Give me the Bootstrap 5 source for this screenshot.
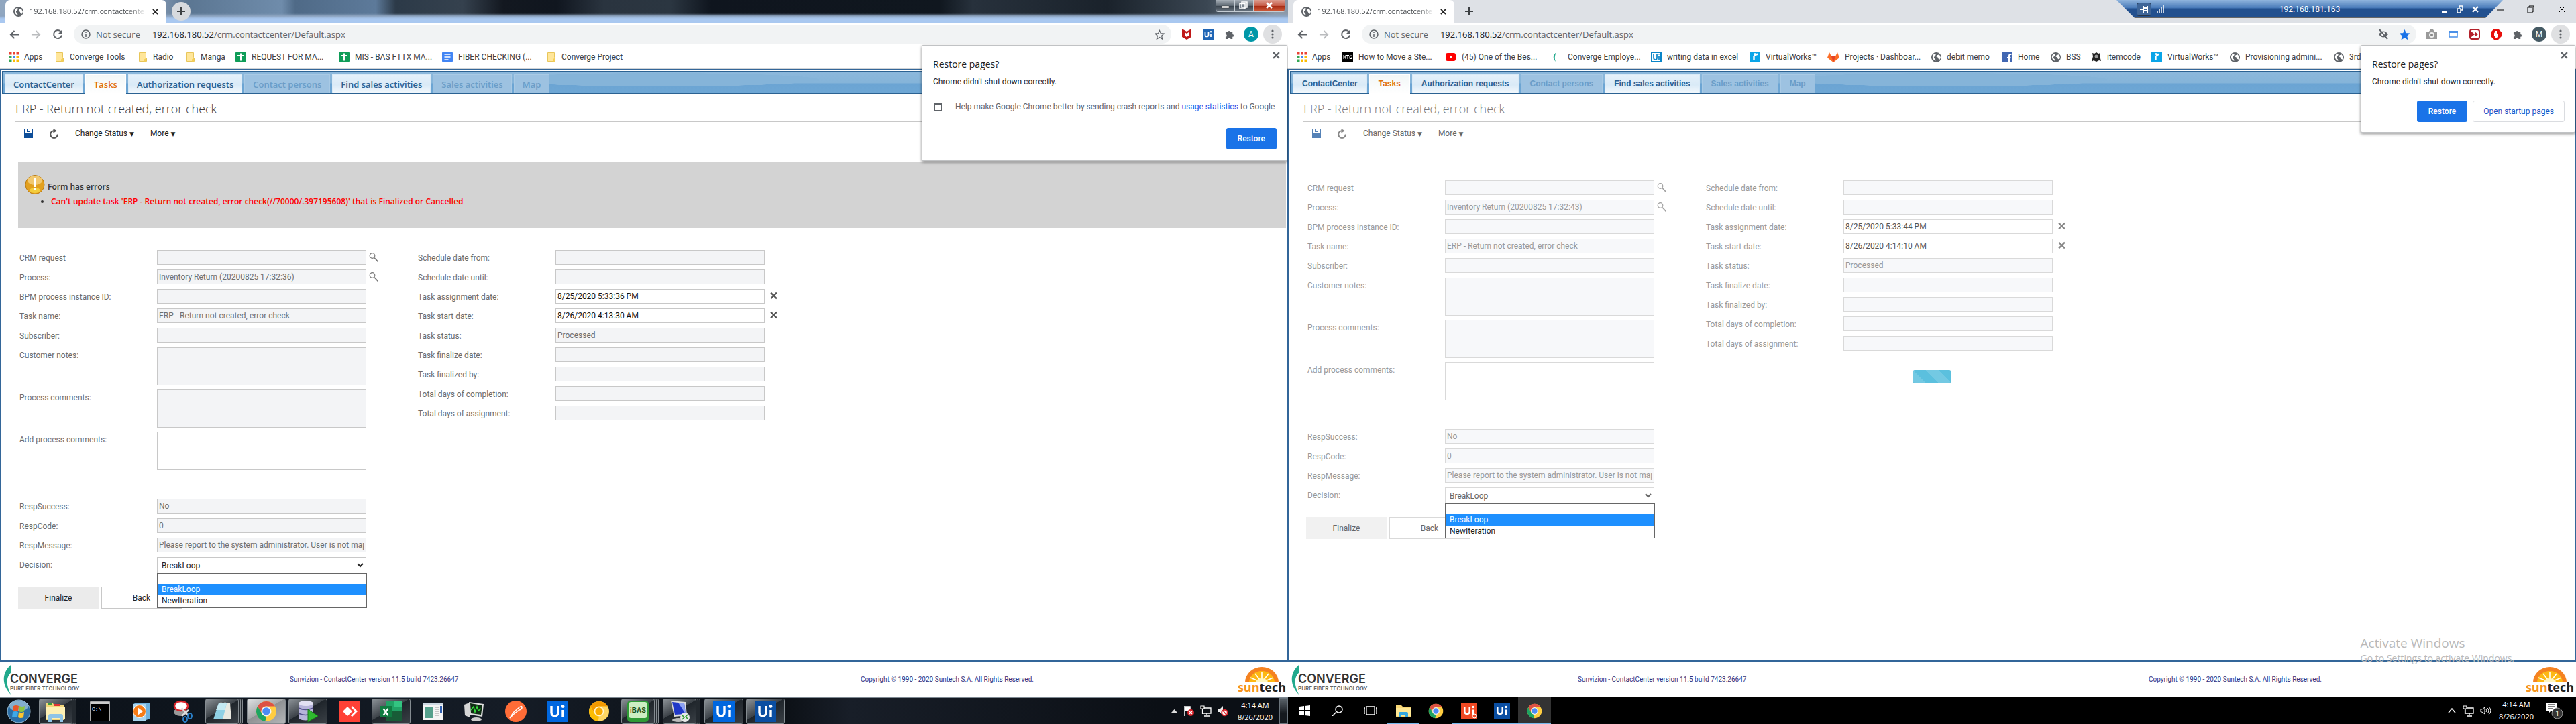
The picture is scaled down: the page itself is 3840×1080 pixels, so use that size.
<!DOCTYPE html>
<html lang="en">
<head>
<meta charset="utf-8">
<meta name="viewport" content="width=device-width, initial-scale=1">
<title>ContactCenter - dual desktop</title>
<link href="https://cdn.jsdelivr.net/npm/bootstrap@5.3.0/dist/css/bootstrap.min.css" rel="stylesheet">
<style>
body{font:12px/16px Roboto,"Open Sans",sans-serif;color:#222;background:#fff;overflow:hidden}
svg{display:block;flex:none}
button{font:inherit;color:inherit;background:none;border:0;padding:0;flex:none}
a{color:inherit;text-decoration:none}
.desk{min-height:100vh;flex:1 1 0;min-width:0;overflow:hidden;--ink:#222;--ttl:#3c3c3c;--lbl:#6c6c6c;--val:#6f6f6f;--date:#111;--bd:#c8c8c8;--fill:#f3f4f6;--ic:1}
.desk.dim{--ink:#666;--ttl:#7c7c7c;--lbl:#999;--val:#999;--date:#555;--bd:#d9d9d9;--fill:#f7f8fa;--ic:.7}
/* window title bars */
.titlebar{height:34px;padding-left:8px;background:#dee1e6}
.aero .titlebar{background:linear-gradient(180deg,transparent 20px,#8da4c0 24px,#a9c8f0 28px,#a9c8f0),linear-gradient(90deg,#91a7c0 0,#7d93ad 240px,#5b7692 280px,#6f8cab 420px,#4f6a87 440px,#5d7a9a 560px,#2c3a48 590px,#35414e 690px,#131820 750px,#10161f 830px,#2a343f 900px,#2b3641 1000px,#0f151e 1060px,#10171f 1400px,#27313c 1450px,#1a222b 1650px,#3b4753 1800px,#8c99a8 1900px)}
.browser-tab{width:240px;height:34px;background:#fff;border-radius:7px 7px 0 0;padding:0 12px;gap:9px}
.tab-text{font:11px/16px "Open Sans",sans-serif;flex:1 1 0;white-space:nowrap;color:#45494d;-webkit-mask-image:linear-gradient(90deg,#000 85%,transparent)}
.newtab{width:28px;height:28px;margin-left:8px;border-radius:50%}
.aero .newtab{background:#d7dade}
.aero-ctl{position:absolute;top:0;right:4px;height:18px;border:1px solid #c4ccd3;border-top:0;border-radius:0 0 4px 4px;background:linear-gradient(#a7afb7,#5e6973 50%,#39434d 52%,#6a7580)}
.aero-ctl button{height:17px;width:28px;border-right:1px solid #c4ccd3}
.aero-ctl .shut{width:46px;border:0;background:linear-gradient(#dc9c8e,#c55a45 50%,#a62a12 52%,#cf5d3c);border-radius:0 0 4px 0}
.ctl10{position:absolute;top:5px;right:15px;gap:33px}
.rdp{position:absolute;top:0;right:109px;width:576px;height:27px;clip-path:polygon(0 0,100% 0,95.5% 100%,4.7% 100%);background:linear-gradient(#8fb4dd,#4779b8 12px,#22508f 13px,#22508f 25px,#666 26px);color:#fff}
.rdp .pin{width:22px;height:20px;border:1px solid #26364a;border-radius:3px;background:#3e6598}
.rl,.rc{width:132px}
.rl{padding-left:30px}
.rc{gap:13px;padding-right:36px}
/* toolbar */
.toolbar{height:34px;padding:0 7px 0 14px}
.nav-ic{width:32px}
.pill{height:28px;background:#f1f3f4;border-radius:14px;font:13px/28px "Open Sans",sans-serif;color:#5f6368;padding:0 10px 0 7px;margin-right:7px}
.pill .sep{width:1px;height:16px;background:#9aa0a6;margin:0 9px 0 8px}
.pill b{font-weight:400;color:#202124}
.ext{width:32px}
.ext svg{margin:0 auto}
.ava{width:22px;height:22px;border-radius:50%;color:#fff;font:12px/22px Roboto,sans-serif;text-align:center;background:#0097a7;margin:0 auto}
.ava.slate{background:#455a64}
.dots{width:28px;height:28px;border-radius:50%;background:#dfe0e2;margin:0 2px}
.bookmarks{display:grid;height:35px;padding-left:14px;border-bottom:1px solid #d0d3d6;color:#3c4043;align-items:center;white-space:nowrap;overflow:hidden}
.bookmarks a{display:flex;align-items:center;gap:8px;height:34px}
.bm-l{grid-template-columns:68px 124px 71px 74px 154px 154px 156px 130px}
.bm-r{grid-template-columns:67px 154px 158px 148px 147px 116px 155px 105px 73px 60px 90px 117px 155px 100px}
/* application */
.work{border:1px solid #336699;border-bottom-width:2px;padding:2px 0 0 2px}
.appnav{height:34px;border:1px solid #2b6292;border-right:0;padding:4px 0 0 3px;gap:3px;background:radial-gradient(ellipse 240px 10px at 980px 12px,#85b4d9 98%,transparent),linear-gradient(#8cb8dc,#85b4d9 17px,#6ba4d3 18px,#6ea7d5)}
.apptab{height:28px;padding:0 12px;font:600 13px/29px "Open Sans",sans-serif;color:#2a6192;background:linear-gradient(#e6f1fa,#d9eaf7 55%,#f4f9fd);border:1px solid #d9eaf7;border-bottom:0;white-space:nowrap}
.dim .apptab{font:bold 12px/26px "Liberation Sans",sans-serif;padding:0 13px}
.apptab.off{background:#9dc2e1;border-color:#a9cae5;color:#6a9dc8}
.apptab.now{color:#e06f0c;background:linear-gradient(#f2f7f7,#fff);height:29px;border-color:#fff}
.page{padding-left:20px}
.head{height:42px;margin:0 19px 0 0;border-bottom:1px solid #c8c8c8;font:300 18px/45px "Open Sans",sans-serif;color:var(--ttl)}
.acts{height:35px;margin-right:19px;border-bottom:1px solid #c8c8c8;padding-left:13px;color:var(--ink)}
.acts svg{opacity:var(--ic)}
.acts i{font:9px/12px "DejaVu Sans",sans-serif}
.errbox{height:99px;margin:24px 2px 0 4px;background:#d3d3d3;padding:20px 0 0 10px;color:#333;font:600 12px/20px "Open Sans",sans-serif}
.errbox ul{margin:0;padding-left:39px;color:red}
.errbox li::marker{color:#333}
.frm{padding:0 0 0 6px;color:var(--lbl)}
.aero .frm{margin-top:33px}
.dim .frm{margin-top:52px}
.fcol{width:594px}
.frow{height:29px;display:flex}
.frow.tall{height:63px}
.frow label{width:205px;line-height:24px}
.frow svg{opacity:var(--ic)}
.fld{width:312px;height:22px;border:1px solid var(--bd);border-radius:0;background:var(--fill);color:var(--val);padding:0 2px;font:12px/20px Roboto,sans-serif;resize:none;display:block}
textarea.fld{height:57px}
.fld.edit{background:#fff;color:var(--date)}
select.fld{height:25px;background:#fff;color:var(--ink)}
.resp{padding-top:37px}
.picker{position:relative;width:312px}
.opts{position:absolute;z-index:3;top:24px;left:0;width:313px;height:52px;border:1px solid #666;background:#fff;color:#222;margin:0;padding:0;list-style:none}
.opts li{height:17px;line-height:17px;padding-left:6px}
.opts li:first-child{height:15px}
.opts .sel{background:#1e90ff;color:#fff}
.fbtns{gap:4px;margin:15px 0 0 -2px}
.fbtns button{width:120px;height:33px;background:#ebebeb;color:var(--ink)}
.fbtns .plain{background:#fff;border:1px solid var(--bd);padding-left:0}
.dim .fbtns button:first-child{background:#f1f1f1}
.spin{position:absolute;left:931px;top:448px;width:56px;height:20px;border-radius:2px;border-bottom:1px solid #3ba7c6;--bs-progress-bar-bg:#5bc0de;background-color:#5bc0de}
.foot{height:53px;color:#333380;font:10px/53px Roboto,sans-serif}
.brand{width:432px}
.brandtxt{font:600 18px/18px Inter,sans-serif;color:#333;padding-top:17px;margin-left:-4px}
.tagl{display:block;font:600 8px/10px Inter,sans-serif;color:#666}
.ver{width:851px}
.suntech{width:76px;padding-top:8px;margin-right:1px;font:bold 18px/14px "Open Sans",sans-serif;color:#222;text-align:center}
.suntech span{color:#f7941d}
/* popups */
.restore{position:absolute;z-index:5;top:67px;right:1px;background:#fff;border:1px solid #c0c2c4;border-radius:2px;box-shadow:0 2px 4px rgba(0,0,0,.45);padding:18px 15px 0 16px;color:#202124}
.restore.a{width:545px;height:173px}
.restore.b{width:320px;height:131px}
.restore .ttl{font:14px/20px "Open Sans",sans-serif}
.restore .cls{position:absolute;top:9px;right:10px}
.rb{height:32px;padding:0 17px;border-radius:3px;background:#1a73e8;color:#fff;font-weight:500}
.rb.o{background:#fff;color:#1a56c8;border:1px solid #dadce0;padding:0 15px;font-weight:400}
.crash{margin:21px 0 0;gap:20px;color:#5f6368}
.crash input{appearance:none;width:12px;height:12px;margin:2px 0 0 1px;border:2px solid #5f6368;flex:none}
.bl{color:#1a56e8}
.rbs{margin-top:24px}
.rbs2{margin-top:20px}
.wmark{position:absolute;z-index:4;right:92px;bottom:88px;color:#b9b9b9;font:14px/20px "Open Sans",sans-serif}
.wmark div{font-size:19px;line-height:26px}
/* task bars */
.bar7{height:40px;background:linear-gradient(90deg,#0b1118,#151c26 40%,#0a0e13 60%,#181e28 66%,#0b0f15 90%);border-top:1px solid #7d8891;color:#fff}
.orb{width:58px}
.slot{width:62px;height:39px}
.slot span{display:flex;width:58px;height:38px;align-items:center;justify-content:center}
.slot.open span{border:1px solid #848b90;border-radius:3px;background:linear-gradient(150deg,#8b9196,#3c4248 45%,#1f252b 46%,#3a4046)}
.slot.multi span{width:50px;box-shadow:2px 0 0 #23292f,3px 0 0 #848b90,5px 0 0 #23292f,6px 0 0 #848b90}
.slot.front span{background:linear-gradient(150deg,#dfe1e2,#a5a8aa 45%,#8e9193 46%,#b4b6b8)}
.clock{font:11px/18px "Open Sans",sans-serif;text-align:center;padding-top:2px}
.bar7 .clock{margin-right:10px}
.ck10{margin-right:18px}
.peek{width:13px;height:39px;border:1px solid #6b747c;background:linear-gradient(#5b636a,#15191e 60%)}
.tray{gap:9px;margin-right:14px}
.tray10{gap:9px;margin-right:11px}
.nt{width:45px}
.bar10{height:40px;background:#000;color:#fff}
.bar10 .it{width:49px;height:40px;display:flex;align-items:center;justify-content:center}
.it.run{box-shadow:inset 0 -2px #76b9ed}
.bar10 .act{background:#333}
</style>
</head>
<body>
<svg width="0" height="0" class="position-absolute">
<defs>
<symbol id="globe" viewBox="0 0 14 14"><circle cx="7" cy="7" r="7" fill="#5f6368"/><path d="M3 3c2-2 4-1 3 1s-3 2-2 4 2 1 2 4c-3-1-5-4-4-7zM8 4l3-1 2 4-1 3-2-1-1-2-2-1z" fill="#fff"/></symbol>
<symbol id="x" viewBox="0 0 10 10"><path d="M1 1l8 8M9 1L1 9" stroke="currentColor" stroke-width="2"/></symbol>
<symbol id="plus" viewBox="0 0 12 12"><path d="M6 0v12M0 6h12" stroke="#3c4043" stroke-width="2"/></symbol>
<symbol id="back" viewBox="0 0 16 16"><path d="M15 8H2M8 2L2 8l6 6" fill="none" stroke="currentColor" stroke-width="2"/></symbol>
<symbol id="reload" viewBox="0 0 16 16"><path d="M13 4.500A6 6 0 1 0 14 9.500" fill="none" stroke="currentColor" stroke-width="2"/><path d="M15 1v6H9z" fill="currentColor"/></symbol>
<symbol id="info" viewBox="0 0 14 14"><circle cx="7" cy="7" r="6" fill="none" stroke="#5f6368" stroke-width="1.500"/><path d="M7 6v5M7 3v2" stroke="#5f6368" stroke-width="1.500"/></symbol>
<symbol id="star" viewBox="0 0 16 16"><path d="M8 1.500l2 4.500 5 .5-3.700 3.300L12.400 15 8 12.200 3.600 15l1.100-5.200L1 6.500 6 6z" stroke-width="1.300"/></symbol>
<symbol id="puzzle" viewBox="0 0 16 16"><path d="M1 4h3.500a2 2 0 1 1 4 0H12v3.500a2 2 0 1 1 0 4V15H9a2 2 0 1 0-4 0H1v-3.500a2 2 0 1 0 0-4z" fill="#5f6368"/></symbol>
<symbol id="vdots" viewBox="0 0 4 14"><circle cx="2" cy="2" r="1.600"/><circle cx="2" cy="7" r="1.600"/><circle cx="2" cy="12" r="1.600"/></symbol>
<symbol id="ui" viewBox="0 0 16 16"><path d="M0 0h16v16H0z" fill="currentColor"/><path d="M3.500 4v5a2.500 2.500 0 0 0 5 0V4M12 7v5" fill="none" stroke="#fff" stroke-width="1.700"/><circle cx="12" cy="4.300" r="1.200" fill="#fff"/></symbol>
<symbol id="apps" viewBox="0 0 14 14"><path d="M0 0h3.500v3.500H0zM5.200 0h3.500v3.500H5.200zM10.500 0H14v3.500h-3.500z" fill="#ea4335"/><path d="M0 5.200h3.500v3.500H0z" fill="#34a853"/><path d="M5.200 5.200h3.500v3.500H5.200z" fill="#4285f4"/><path d="M10.500 5.200H14v3.500h-3.500zM5.200 10.500h3.500V14H5.200zM10.500 10.500H14V14h-3.500z" fill="#fbbc05"/><path d="M0 10.500h3.500V14H0z" fill="#34a853"/></symbol>
<symbol id="fold" viewBox="0 0 12 14"><path d="M.5.5h10v7l1 1v5H.5z" fill="#ffe69a" stroke="#e8c65a"/><path d="M8 13.500v-3l3-2v5z" fill="#f5cf57"/></symbol>
<symbol id="sheet" viewBox="0 0 16 16"><rect width="16" height="16" rx="2" fill="#0f9d58"/><path d="M8 2.500v11M3 6h10" stroke="#fff" stroke-width="2"/></symbol>
<symbol id="doc" viewBox="0 0 16 16"><rect width="16" height="16" rx="2" fill="#4285f4"/><path d="M3.500 4h9M3.500 8h9M3.500 12h6" stroke="#fff" stroke-width="1.600"/></symbol>
<symbol id="rr" viewBox="0 0 16 16"><path d="M0 0h16v16H0z" fill="#0aa5e8"/><path d="M6.500 13V6M6 3.500h2V7q0-3 4-3.300" fill="none" stroke="#fff" stroke-width="2.400"/></symbol>
<symbol id="save" viewBox="0 0 13 13"><path d="M0 0h2v5h9V0h2v13H0zM4 0h2v3h2V0h1v4H4z" fill="#0e4e99"/></symbol>
<symbol id="redo" viewBox="0 0 14 14"><path d="M7 3a5 5 0 1 0 5 5" fill="none" stroke="#555" stroke-width="2"/><path d="M6 0l5 3-5 3z" fill="#555"/></symbol>
<symbol id="mag" viewBox="0 0 14 14"><circle cx="5" cy="4.500" r="3.800" fill="none" stroke="#777" stroke-width="1.200"/><path d="M8 7.500l5.500 6" stroke="#777" stroke-width="1.600"/></symbol>
<symbol id="chrome" viewBox="0 0 32 32"><circle cx="16" cy="16" r="15" fill="#ffcd40"/><path d="M3 8.500A15 15 0 0 1 29 8.500H16a7.500 7.500 0 0 0-6.500 11.300z" fill="#dd5144"/><path d="M3 8.500l6.500 11.300A7.500 7.500 0 0 0 16 23.500L14.500 31A15 15 0 0 1 3 8.500z" fill="#1da462"/><path d="M16 23.500a7.500 7.500 0 0 0 6-3.700L14.500 31z" fill="#ffcd40"/><circle cx="16" cy="16" r="7.500" fill="#f4f4f4"/><circle cx="16" cy="16" r="5.800" fill="#4c8bf5"/></symbol>
<symbol id="canary" viewBox="0 0 32 32"><circle cx="16" cy="16" r="15" fill="#fdd663"/><path d="M3 8.500A15 15 0 0 1 29 8.500H16a7.500 7.500 0 0 0-6.500 11.300z" fill="#f29900"/><path d="M3 8.500l6.500 11.300A7.500 7.500 0 0 0 16 23.500L14.500 31A15 15 0 0 1 3 8.500z" fill="#fbbc04"/><circle cx="16" cy="16" r="6.500" fill="#f9ab00" stroke="#fff4d0" stroke-width="1.600"/></symbol>
<symbol id="converge" viewBox="0 0 16 50"><path d="M13 1C-2 14-2 34 13 49 5 34 5 20 14 13z" fill="#21a98c"/></symbol>
<symbol id="sun" viewBox="0 0 50 23"><path d="M0 23a25 23 0 0 1 50 0z" fill="#f58220"/><path d="M6 23a19 17 0 0 1 38 0z" fill="#fdb813"/><path d="M25 8v15M15 10l10 13 10-13M8 16l17 7 17-7" stroke="#fff" stroke-width="1.600" fill="none"/><ellipse cx="25" cy="23" rx="9" ry="6" fill="#fff6c0"/></symbol>
<symbol id="net" viewBox="0 0 17 17"><path d="M4 4h12v8H4zM10 12v3M6 16h8" fill="none" stroke="#fff" stroke-width="1.300"/><path d="M1 1h5v4H1zM3.500 5v8" fill="#000" stroke="#fff" stroke-width="1.200"/></symbol>
</defs>
</svg>

<main class="d-flex">

<!-- Left desktop -->
<section class="desk aero position-relative d-flex flex-column">
  <div class="titlebar d-flex align-items-center">
    <div class="browser-tab d-flex align-items-center"><svg width="15" height="15"><use href="#globe"/></svg><span class="tab-text">192.168.180.52/crm.contactcente</span><button aria-label="Close tab"><svg width="9" height="9"><use href="#x"/></svg></button></div>
    <button class="newtab d-flex align-items-center justify-content-center" aria-label="New tab"><svg width="12" height="12"><use href="#plus"/></svg></button>
    <div class="aero-ctl d-flex"><button aria-label="Minimize"><svg width="27" height="17"><path d="M8 9h11v3H8z" fill="#fff" stroke="#444" stroke-width=".500"/></svg></button><button aria-label="Restore down"><svg width="27" height="17"><path d="M10 3h8v8h-8zM7 5.500h8V13H7z" fill="#7b858f" stroke="#fff" stroke-width="1.500"/></svg></button><button class="shut" aria-label="Close"><svg width="46" height="17"><path d="M19 4l8 8M27 4l-8 8" stroke="#fff" stroke-width="2.500"/></svg></button></div>
  </div>
  <div class="toolbar d-flex align-items-center">
    <button class="nav-ic" aria-label="Back"><svg width="15" height="15" color="#5f6368"><use href="#back"/></svg></button>
    <button class="nav-ic" aria-label="Forward"><svg width="15" height="15" viewBox="0 0 16 16" color="#babcbe"><path d="M1 8h13M8 2l6 6-6 6" fill="none" stroke="currentColor" stroke-width="2"/></svg></button>
    <button class="nav-ic" aria-label="Reload"><svg width="16" height="16" color="#5f6368"><use href="#reload"/></svg></button>
    <div class="pill d-flex align-items-center flex-grow-1"><svg width="14" height="14" class="me-2 ms-1"><use href="#info"/></svg><span>Not secure</span><i class="sep"></i><span class="flex-grow-1"><b>192.168.180.52</b>/crm.contactcenter/Default.aspx</span><svg width="15" height="15" fill="none" stroke="#5f6368"><use href="#star"/></svg></div>
    <button class="ext" aria-label="McAfee"><svg width="14" height="16" viewBox="0 0 14 16"><path d="M0 0l7 4 7-4v12l-7 4-7-4zM4 5v5l3 2 3-2V5L7 7z" fill="#c01818" fill-rule="evenodd"/></svg></button>
    <button class="ext" aria-label="UiPath"><svg width="16" height="16" color="#1f65b5"><use href="#ui"/></svg></button>
    <button class="ext" aria-label="Extensions"><svg width="15" height="15"><use href="#puzzle"/></svg></button>
    <button class="ext" aria-label="Profile"><div class="ava">A</div></button>
    <button class="dots" aria-label="Menu"><svg class="mx-auto" width="4" height="14" fill="#5f6368"><use href="#vdots"/></svg></button>
  </div>
  <nav class="bookmarks bm-l">
    <a href="#"><svg width="14" height="14"><use href="#apps"/></svg>Apps</a>
    <a href="#"><svg width="14" height="14"><use href="#fold"/></svg>Converge Tools</a>
    <a href="#"><svg width="14" height="14"><use href="#fold"/></svg>Radio</a>
    <a href="#"><svg width="14" height="14"><use href="#fold"/></svg>Manga</a>
    <a href="#"><svg width="16" height="16"><use href="#sheet"/></svg>REQUEST FOR MA...</a>
    <a href="#"><svg width="16" height="16"><use href="#sheet"/></svg>MIS - BAS FTTX MA...</a>
    <a href="#"><svg width="16" height="16"><use href="#doc"/></svg>FIBER CHECKING (...</a>
    <a href="#"><svg width="14" height="14"><use href="#fold"/></svg>Converge Project</a>
  </nav>
  <div class="work flex-grow-1 position-relative">
    <nav class="appnav d-flex">
      <a class="apptab" href="#">ContactCenter</a><a class="apptab now" href="#">Tasks</a><a class="apptab" href="#">Authorization requests</a><a class="apptab off" href="#">Contact persons</a><a class="apptab" href="#">Find sales activities</a><a class="apptab off" href="#">Sales activities</a><a class="apptab off" href="#">Map</a>
    </nav>
    <div class="page">
      <h1 class="head">ERP - Return not created, error check</h1>
      <div class="acts d-flex align-items-center">
        <button aria-label="Save"><svg width="13" height="13"><use href="#save"/></svg></button>
        <button class="mx-4" aria-label="Refresh"><svg width="15" height="15"><use href="#redo"/></svg></button>
        <button class="me-4">Change Status <i>▼</i></button><button>More <i>▼</i></button>
      </div>
      <div class="errbox" role="alert">
        <div class="d-flex"><svg width="30" height="30" viewBox="0 0 30 30"><circle cx="15" cy="14.500" r="14" fill="#e2a01f" stroke="#b97b15"/><ellipse cx="15" cy="8" rx="11" ry="7" fill="#fbe3a6" opacity=".6"/><ellipse cx="15" cy="23" rx="8" ry="4" fill="#fbe04a" opacity=".7"/><path d="M13 5h4l-1 13h-2zM13 20h4v3h-4z" fill="#fff"/></svg><span class="ps-1 pt-2">Form has errors</span></div>
        <ul><li>Can't update task 'ERP - Return not created, error check(//70000/.397195608)' that is Finalized or Cancelled</li></ul>
      </div>
      <form class="frm">
        <div class="d-flex">
          <div class="fcol">
            <div class="frow"><label for="l1">CRM request</label><input id="l1" class="fld" readonly><svg class="ms-1 mt-1" width="14" height="14"><use href="#mag"/></svg></div>
            <div class="frow"><label for="l2">Process:</label><input id="l2" class="fld" value="Inventory Return (20200825 17:32:36)" readonly><svg class="ms-1 mt-1" width="14" height="14"><use href="#mag"/></svg></div>
            <div class="frow"><label for="l3">BPM process instance ID:</label><input id="l3" class="fld" readonly></div>
            <div class="frow"><label for="l4">Task name:</label><input id="l4" class="fld" value="ERP - Return not created, error check" readonly></div>
            <div class="frow"><label for="l5">Subscriber:</label><input id="l5" class="fld" readonly></div>
            <div class="frow tall"><label for="l6">Customer notes:</label><textarea id="l6" class="fld" readonly></textarea></div>
            <div class="frow tall"><label for="l7">Process comments:</label><textarea id="l7" class="fld" readonly></textarea></div>
            <div class="frow tall"><label for="l8">Add process comments:</label><textarea id="l8" class="fld edit"></textarea></div>
          </div>
          <div class="fcol">
            <div class="frow"><label for="l9">Schedule date from:</label><input id="l9" class="fld" readonly></div>
            <div class="frow"><label for="l10">Schedule date until:</label><input id="l10" class="fld" readonly></div>
            <div class="frow"><label for="l11">Task assignment date:</label><input id="l11" class="fld edit" value="8/25/2020 5:33:36 PM"><svg class="ms-2 mt-1" width="11" height="12" color="#555"><use href="#x"/></svg></div>
            <div class="frow"><label for="l12">Task start date:</label><input id="l12" class="fld edit" value="8/26/2020 4:13:30 AM"><svg class="ms-2 mt-1" width="11" height="12" color="#555"><use href="#x"/></svg></div>
            <div class="frow"><label for="l13">Task status:</label><input id="l13" class="fld" value="Processed" readonly></div>
            <div class="frow"><label for="l14">Task finalize date:</label><input id="l14" class="fld" readonly></div>
            <div class="frow"><label for="l15">Task finalized by:</label><input id="l15" class="fld" readonly></div>
            <div class="frow"><label for="l16">Total days of completion:</label><input id="l16" class="fld" readonly></div>
            <div class="frow"><label for="l17">Total days of assignment:</label><input id="l17" class="fld" readonly></div>
          </div>
        </div>
        <div class="resp">
          <div class="frow"><label for="l18">RespSuccess:</label><input id="l18" class="fld" value="No" readonly></div>
          <div class="frow"><label for="l19">RespCode:</label><input id="l19" class="fld" value="0" readonly></div>
          <div class="frow"><label for="l20">RespMessage:</label><input id="l20" class="fld" value="Please report to the system administrator. User is not map" readonly></div>
          <div class="frow"><label for="l21">Decision:</label><div class="picker"><select id="l21" class="fld"><option>BreakLoop</option><option>NewIteration</option></select><ul class="opts"><li></li><li class="sel">BreakLoop</li><li>NewIteration</li></ul></div></div>
        </div>
        <div class="fbtns d-flex"><button type="button">Finalize</button><button type="button" class="plain">Back</button></div>
      </form>
    </div>
  </div>
  <footer class="foot d-flex">
    <div class="brand d-flex"><svg width="15" height="46" class="mt-1 ms-1"><use href="#converge"/></svg><div class="brandtxt">CONVERGE<span class="tagl">PURE FIBER TECHNOLOGY</span></div></div>
    <div class="ver">Sunvizion - ContactCenter version 11.5 build 7423.26647</div>
    <div class="flex-grow-1">Copyright © 1990 - 2020 Suntech S.A. All Rights Reserved.</div>
    <div class="suntech"><svg width="50" height="23" class="mx-auto"><use href="#sun"/></svg><span>sun</span>tech</div>
  </footer>
  <div class="bar7 d-flex">
    <button class="orb d-flex justify-content-center align-items-center" aria-label="Start"><svg width="38" height="36" viewBox="0 0 38 36"><circle cx="18" cy="18" r="17" fill="#2b6ea6" stroke="#9fc3da"/><ellipse cx="18" cy="10" rx="14" ry="8" fill="#a9c9df" opacity=".7"/><path d="M10 10q4-2 8 0l-1 8q-4-2-8 0z" fill="#e8572a"/><path d="M19 10q4 2 8 0l-1 8q-4 2-8 0z" fill="#8cc63f"/><path d="M9 19q4-2 8 0l-1 8q-4-2-8 0z" fill="#3fa9e8"/><path d="M18 19q4 2 8 0l-1 8q-4 2-8 0z" fill="#fdc62f"/></svg></button>
    <button class="slot open multi" aria-label="Explorer"><span><svg width="34" height="34" viewBox="0 0 34 34"><path d="M3 5h10l2 3h15v22H3z" fill="#f3d678"/><path d="M5 4h7v3H5z" fill="#3a9e3a"/><path d="M14 6h9v3h-9z" fill="#d33"/><path d="M3 11h28v18H3z" fill="#fdf0b4"/><path d="M6 33v-9q0-3 3-3h16q3 0 3 3v9h-5v-6H11v6z" fill="#8fc4e6"/></svg></span></button>
    <button class="slot" aria-label="Command prompt"><span><svg width="30" height="30" viewBox="0 0 30 30"><path d="M.5.500h29v29H.5z" fill="#000" stroke="#aaa"/><path d="M1 1h28v3H1z" fill="#ccc"/><text x="3" y="14" font-size="8" fill="#fff" font-family="Liberation Mono">C:\_</text></svg></span></button>
    <button class="slot" aria-label="Media player"><span><svg width="28" height="30" viewBox="0 0 28 30"><path d="M6 2h20v24l-5 2H2V4z" fill="#6fb2dd"/><path d="M2 4h19v25H2z" fill="#a8d4ee"/><circle cx="11" cy="15" r="9.500" fill="#f57c17" stroke="#fff"/><path d="M8 9l8 6-8 6z" fill="#fff"/></svg></span></button>
    <button class="slot" aria-label="Snipping tool"><span><svg width="32" height="34" viewBox="0 0 32 34"><ellipse cx="12" cy="18" rx="10" ry="6" fill="#999"/><ellipse cx="13" cy="9" rx="10" ry="7" fill="#fff" stroke="#d8242b" stroke-width="2.500"/><path d="M14 12l10 12M24 15L14 24" stroke="#ddd" stroke-width="2.500"/><ellipse cx="26" cy="24" rx="3" ry="4" fill="none" stroke="#2a7fc8" stroke-width="2"/><ellipse cx="19" cy="29" rx="3" ry="4" fill="none" stroke="#2a7fc8" stroke-width="2"/></svg></span></button>
    <button class="slot open multi" aria-label="Notepad"><span><svg width="32" height="32" viewBox="0 0 32 32"><path d="M19 4h9l2 24H17z" fill="#e8e8e0"/><path d="M11 4h12l-6 24H3z" fill="#8fd0e4"/><path d="M11 4h12l-3 10H7z" fill="#c4e9f2"/><path d="M11 3h14" stroke="#777" stroke-width="2" stroke-dasharray="1 1"/></svg></span></button>
    <button class="slot open front" aria-label="Chrome"><span><svg width="32" height="32"><use href="#chrome"/></svg></span></button>
    <button class="slot open" aria-label="SQL tool"><span><svg width="34" height="34" viewBox="0 0 34 34"><path d="M3 5v23q10 5 22 0V5z" fill="#b6b4da"/><ellipse cx="14" cy="5" rx="11" ry="4" fill="#e2e1f2"/><path d="M3 12q10 5 22 0M3 20q10 5 22 0" stroke="#55528c" stroke-width="1.500" fill="none"/><path d="M17 14l15 10-15 9z" fill="#2fb82f" stroke="#187a18"/></svg></span></button>
    <button class="slot" aria-label="AnyDesk"><span><svg width="32" height="32" viewBox="0 0 32 32"><path d="M0 0h32v32H0z" fill="#ff4136"/><path d="M13 9l7 7-7 7-7-7zM18 9.500l2-1.500 8 8-8 8-2-1.500 6-6.500z" fill="#fff"/></svg></span></button>
    <button class="slot open" aria-label="Excel"><span><svg width="34" height="30" viewBox="0 0 34 30"><path d="M9 0h24v30H9z" fill="#21a366"/><path d="M21 0h12v8H21z" fill="#33c481"/><path d="M9 15h24v15H9z" fill="#185c37"/><path d="M0 7h18v17H0z" fill="#107c41"/><path d="M5.500 11l7 10M12.500 11l-7 10" stroke="#fff" stroke-width="2.300"/></svg></span></button>
    <button class="slot" aria-label="Viewer"><span><svg width="30" height="26" viewBox="0 0 30 26"><path d="M0 0h30v26H0z" fill="#f4f4f4"/><path d="M0 0h30v3H0z" fill="#cdd8e2"/><path d="M3 6h12v17H3z" fill="#55a08c"/><path d="M18 7h6M18 10h6M18 13h6M18 16h6M18 19h6" stroke="#999"/><path d="M26 5h3v10h-3z" fill="#2f5fb0"/></svg></span></button>
    <button class="slot" aria-label="Monitor"><span><svg width="32" height="32" viewBox="0 0 32 32"><path d="M1 6l8-3v22l-7-3z" fill="#d6d6d6"/><path d="M8 2l22 3-2 19-18-3z" fill="#ddd"/><path d="M10 4l18 3-2 14-15-2z" fill="#0f2c14"/><path d="M11 14l4-5 2 8 3-8 2 6 4-3" stroke="#36e03c" fill="none" stroke-width="1.500"/><ellipse cx="19" cy="28" rx="8" ry="3" fill="#ccc"/></svg></span></button>
    <button class="slot" aria-label="Postman"><span><svg width="32" height="32" viewBox="0 0 32 32"><circle cx="16" cy="16" r="16" fill="#ff6c37"/><path d="M7 26l5-8 9-8q4-3 4 0t-4 4l-8 6z" fill="none" stroke="#fff" stroke-width="1.500"/></svg></span></button>
    <button class="slot" aria-label="UiPath"><span><svg width="32" height="32" color="#0067df"><use href="#ui"/></svg></span></button>
    <button class="slot" aria-label="Chrome Canary"><span><svg width="32" height="32"><use href="#canary"/></svg></span></button>
    <button class="slot open multi" aria-label="iBAS"><span><svg width="32" height="32" viewBox="0 0 32 32"><rect width="32" height="32" rx="5" fill="#2e9a35"/><rect x="2" y="2" width="28" height="24" rx="4" fill="#cdeec2"/><text x="4" y="18" font-size="10" font-weight="bold" fill="#174f1a" font-family="Liberation Sans"><tspan fill="#c7351d">i</tspan>BAS</text></svg></span></button>
    <button class="slot open multi" aria-label="Remote desktop"><span><svg width="32" height="34" viewBox="0 0 32 34"><path d="M3 1l22 2 2 20-19 2z" fill="#dcdcdc"/><path d="M5 3l18 2 2 16-16 1z" fill="#2038c8"/><path d="M14 4l9 1 2 16z" fill="#8da2f2"/><ellipse cx="14" cy="30" rx="9" ry="3" fill="#bbb"/><circle cx="24" cy="26" r="7" fill="#e8e8e8"/><path d="M20 23l3 3-3 3M28 22l-3 3 3 3" stroke="#2b9b2b" stroke-width="1.600" fill="none"/></svg></span></button>
    <button class="slot open" aria-label="UiPath Studio"><span><svg width="32" height="32" color="#0067df"><use href="#ui"/></svg></span></button>
    <button class="slot open" aria-label="UiPath Robot"><span><svg width="32" height="32" color="#0a4ea2"><use href="#ui"/></svg></span></button>
    <div class="tray ms-auto d-flex align-items-center">
      <svg width="9" height="5" viewBox="0 0 9 5"><path d="M0 5l4.500-5L9 5z" fill="#ddd"/></svg>
      <svg width="16" height="17" viewBox="0 0 16 17"><path d="M2 1v15M3 2h7v6H3z" stroke="#fff" stroke-width="1.500" fill="#fff"/><circle cx="11" cy="11" r="5" fill="#d8232a"/><path d="M9 9l4 4M13 9l-4 4" stroke="#fff" stroke-width="1.300"/></svg>
      <svg width="17" height="17"><use href="#net"/></svg>
      <svg width="16" height="17" viewBox="0 0 16 17"><path d="M1 6h2l5-5v14l-5-5H1z" fill="#eee"/><circle cx="10.500" cy="11" r="4.300" fill="#fff" stroke="#d8232a" stroke-width="2"/><path d="M8 8l5 6" stroke="#d8232a" stroke-width="1.500"/></svg>
    </div>
    <div class="clock">4:14 AM<br>8/26/2020</div><div class="peek"></div>
  </div>
  <div class="restore a" role="dialog">
    <button class="cls" aria-label="Close"><svg width="11" height="11" color="#5f6368"><use href="#x"/></svg></button>
    <div class="ttl">Restore pages?</div><div class="mt-2">Chrome didn't shut down correctly.</div>
    <div class="crash d-flex align-items-center"><input type="checkbox" id="crash"><label for="crash">Help make Google Chrome better by sending crash reports and <a href="#" class="bl">usage statistics</a> to Google</label></div>
    <div class="d-flex justify-content-end rbs"><button class="rb">Restore</button></div>
  </div>
</section>

<!-- Right desktop -->
<section class="desk dim position-relative d-flex flex-column">
  <div class="titlebar d-flex align-items-center">
    <div class="browser-tab d-flex align-items-center"><svg width="15" height="15"><use href="#globe"/></svg><span class="tab-text">192.168.180.52/crm.contactcente</span><button aria-label="Close tab"><svg width="9" height="9"><use href="#x"/></svg></button></div>
    <button class="newtab d-flex align-items-center justify-content-center" aria-label="New tab"><svg width="12" height="12"><use href="#plus"/></svg></button>
    <div class="ctl10 d-flex"><button aria-label="Minimize"><svg width="13" height="17"><path d="M2 10h10" stroke="#000"/></svg></button><button aria-label="Restore down"><svg width="13" height="17"><path d="M4 6V4h7v8H9M2 6h7v8H2z" fill="none" stroke="#000"/></svg></button><button aria-label="Close"><svg width="13" height="17"><path d="M2 4l10 10M12 4L2 14" stroke="#000"/></svg></button></div>
    <div class="rdp d-flex align-items-center justify-content-between">
      <div class="d-flex gap-2 rl"><button class="pin" aria-label="Pin"><svg width="20" height="18"><path d="M4 9h5M9 4v10M9 7h5M9 11h5M15 4v10" stroke="#fff" stroke-width="2"/></svg></button><svg width="12" height="18"><path d="M1 13v3M4 10v6M7 7v9M10 4v12" stroke="#fff" stroke-width="1.500"/></svg></div>
      <span>192.168.181.163</span>
      <div class="d-flex justify-content-end rc"><button aria-label="Minimize bar"><svg width="10" height="14"><path d="M1 11h8" stroke="#fff" stroke-width="2"/></svg></button><button aria-label="Restore bar"><svg width="10" height="14"><path d="M4 5V2h5v6H7M1 6h5v6H1z" fill="none" stroke="#fff" stroke-width="1.500"/></svg></button><button aria-label="Close bar"><svg width="10" height="14"><path d="M1 3l8 8M9 3l-8 8" stroke="#fff" stroke-width="2"/></svg></button></div>
    </div>
  </div>
  <div class="toolbar d-flex align-items-center">
    <button class="nav-ic" aria-label="Back"><svg width="15" height="15" color="#5f6368"><use href="#back"/></svg></button>
    <button class="nav-ic" aria-label="Forward"><svg width="15" height="15" viewBox="0 0 16 16" color="#babcbe"><path d="M1 8h13M8 2l6 6-6 6" fill="none" stroke="currentColor" stroke-width="2"/></svg></button>
    <button class="nav-ic" aria-label="Reload"><svg width="16" height="16" color="#5f6368"><use href="#reload"/></svg></button>
    <div class="pill d-flex align-items-center flex-grow-1"><svg width="14" height="14" class="me-2 ms-1"><use href="#info"/></svg><span>Not secure</span><i class="sep"></i><span class="flex-grow-1"><b>192.168.180.52</b>/crm.contactcenter/Default.aspx</span><svg class="me-3" width="16" height="16" viewBox="0 0 16 16"><path d="M1 8q7-9 14 0-7 9-14 0z" fill="#5f6368"/><circle cx="8" cy="8" r="3" fill="#fff"/><path d="M2 1l12 14" stroke="#5f6368" stroke-width="2"/></svg><svg width="15" height="15" fill="#1a73e8" stroke="#1a73e8"><use href="#star"/></svg></div>
    <button class="ext" aria-label="Screenshot"><svg width="16" height="14" viewBox="0 0 16 14"><path d="M0 3h4l2-3h4l2 3h4v11H0z" fill="#9a9a9a"/><circle cx="8" cy="8" r="4" fill="#eee"/><circle cx="8" cy="8" r="2" fill="#888"/></svg></button>
    <button class="ext" aria-label="Window"><svg width="14" height="10" viewBox="0 0 14 10"><path d="M1 1h12v8H1z" fill="#fff" stroke="#4a90e8" stroke-width="1.500"/><path d="M0 0h14v3H0z" fill="#4a90e8"/></svg></button>
    <button class="ext" aria-label="Fast forward"><svg width="16" height="16" viewBox="0 0 16 16"><rect x="1" y="1" width="14" height="14" rx="3" fill="#fff" stroke="#b3202a" stroke-width="2"/><path d="M3 4l5 4-5 4zM8 4l5 4-5 4z" fill="#b3202a"/></svg></button>
    <button class="ext" aria-label="AdBlock"><svg width="16" height="16" viewBox="0 0 16 16"><path d="M5 0h6l5 5v6l-5 5H5l-5-5V5z" fill="#e8100c"/><path d="M5 5v5l3 4 3-3V5L9 8V3H7v5z" fill="#fff"/></svg></button>
    <button class="ext" aria-label="Extensions"><svg width="15" height="15"><use href="#puzzle"/></svg></button>
    <button class="ext" aria-label="Profile"><div class="ava slate">M</div></button>
    <button class="dots" aria-label="Menu"><svg class="mx-auto" width="4" height="14" fill="#5f6368"><use href="#vdots"/></svg></button>
  </div>
  <nav class="bookmarks bm-r">
    <a href="#"><svg width="14" height="14"><use href="#apps"/></svg>Apps</a>
    <a href="#"><svg width="16" height="16" viewBox="0 0 16 16"><path d="M0 0h16v16H0z"/><path d="M2 5v6M5 5v6M2 8h3M6 5.500h4M8 5v6M14 6h-3v4.500h3V8" stroke="#fff" fill="none"/></svg>How to Move a Ste...</a>
    <a href="#"><svg width="16" height="16" viewBox="0 0 16 16"><rect y="2" width="15" height="12" rx="3" fill="#f00"/><path d="M6 5l4 3-4 3z" fill="#fff"/></svg>(45) One of the Bes...</a>
    <a href="#"><svg width="16" height="16" viewBox="0 0 16 16"><path d="M7 1Q-1 8 6 15 3 8 7 1z" fill="#21a98c"/></svg>Converge Employe...</a>
    <a href="#"><svg width="16" height="16" viewBox="0 0 16 16"><path d="M1 1h14v14H1z" fill="#fff" stroke="#0a85c8" stroke-width="2"/><path d="M4 4v5q0 3 2.500 3T9 9V4M12 6v6M12 3.500v1" stroke="#0a85c8" stroke-width="1.700" fill="none"/></svg>writing data in excel</a>
    <a href="#"><svg width="16" height="16"><use href="#rr"/></svg>VirtualWorks™</a>
    <a href="#"><svg width="18" height="16" viewBox="0 0 18 16"><path d="M0 9L3 1l3 6h6l3-6 3 8-9 7z" fill="#fc6d26"/><path d="M6 7h6l-3 9z" fill="#e24329"/></svg>Projects · Dashboar...</a>
    <a href="#"><svg width="15" height="15"><use href="#globe"/></svg>debit memo</a>
    <a href="#"><svg width="16" height="16" viewBox="0 0 16 16"><path d="M0 0h16v16H0z" fill="#4267b2"/><path d="M11 16V9h2.500M8 9h5M11 10V6q0-2.500 3.500-2" stroke="#fff" stroke-width="2" fill="none"/></svg>Home</a>
    <a href="#"><svg width="15" height="15"><use href="#globe"/></svg>BSS</a>
    <a href="#"><svg width="16" height="16" viewBox="0 0 16 16"><path d="M2 2l3 1 3-2 3 2 3-1-1 4 2 8-3-1-4 2-4-2-3 2 2-8z" fill="#222"/><circle cx="8" cy="7" r="2.500" fill="#999"/></svg>itemcode</a>
    <a href="#"><svg width="16" height="16"><use href="#rr"/></svg>VirtualWorks™</a>
    <a href="#"><svg width="15" height="15"><use href="#globe"/></svg>Provisioning admini...</a>
    <a href="#"><svg width="15" height="15"><use href="#globe"/></svg>3rd</a>
  </nav>
  <div class="work flex-grow-1 position-relative">
    <nav class="appnav d-flex">
      <a class="apptab" href="#">ContactCenter</a><a class="apptab now" href="#">Tasks</a><a class="apptab" href="#">Authorization requests</a><a class="apptab off" href="#">Contact persons</a><a class="apptab" href="#">Find sales activities</a><a class="apptab off" href="#">Sales activities</a><a class="apptab off" href="#">Map</a>
    </nav>
    <div class="page">
      <h1 class="head">ERP - Return not created, error check</h1>
      <div class="acts d-flex align-items-center">
        <button aria-label="Save"><svg width="13" height="13"><use href="#save"/></svg></button>
        <button class="mx-4" aria-label="Refresh"><svg width="15" height="15"><use href="#redo"/></svg></button>
        <button class="me-4">Change Status <i>▼</i></button><button>More <i>▼</i></button>
      </div>
      <form class="frm">
        <div class="d-flex">
          <div class="fcol">
            <div class="frow"><label for="r1">CRM request</label><input id="r1" class="fld" readonly><svg class="ms-1 mt-1" width="14" height="14"><use href="#mag"/></svg></div>
            <div class="frow"><label for="r2">Process:</label><input id="r2" class="fld" value="Inventory Return (20200825 17:32:43)" readonly><svg class="ms-1 mt-1" width="14" height="14"><use href="#mag"/></svg></div>
            <div class="frow"><label for="r3">BPM process instance ID:</label><input id="r3" class="fld" readonly></div>
            <div class="frow"><label for="r4">Task name:</label><input id="r4" class="fld" value="ERP - Return not created, error check" readonly></div>
            <div class="frow"><label for="r5">Subscriber:</label><input id="r5" class="fld" readonly></div>
            <div class="frow tall"><label for="r6">Customer notes:</label><textarea id="r6" class="fld" readonly></textarea></div>
            <div class="frow tall"><label for="r7">Process comments:</label><textarea id="r7" class="fld" readonly></textarea></div>
            <div class="frow tall"><label for="r8">Add process comments:</label><textarea id="r8" class="fld edit"></textarea></div>
          </div>
          <div class="fcol">
            <div class="frow"><label for="r9">Schedule date from:</label><input id="r9" class="fld" readonly></div>
            <div class="frow"><label for="r10">Schedule date until:</label><input id="r10" class="fld" readonly></div>
            <div class="frow"><label for="r11">Task assignment date:</label><input id="r11" class="fld edit" value="8/25/2020 5:33:44 PM"><svg class="ms-2 mt-1" width="11" height="12" color="#555"><use href="#x"/></svg></div>
            <div class="frow"><label for="r12">Task start date:</label><input id="r12" class="fld edit" value="8/26/2020 4:14:10 AM"><svg class="ms-2 mt-1" width="11" height="12" color="#555"><use href="#x"/></svg></div>
            <div class="frow"><label for="r13">Task status:</label><input id="r13" class="fld" value="Processed" readonly></div>
            <div class="frow"><label for="r14">Task finalize date:</label><input id="r14" class="fld" readonly></div>
            <div class="frow"><label for="r15">Task finalized by:</label><input id="r15" class="fld" readonly></div>
            <div class="frow"><label for="r16">Total days of completion:</label><input id="r16" class="fld" readonly></div>
            <div class="frow"><label for="r17">Total days of assignment:</label><input id="r17" class="fld" readonly></div>
          </div>
        </div>
        <div class="resp">
          <div class="frow"><label for="r18">RespSuccess:</label><input id="r18" class="fld" value="No" readonly></div>
          <div class="frow"><label for="r19">RespCode:</label><input id="r19" class="fld" value="0" readonly></div>
          <div class="frow"><label for="r20">RespMessage:</label><input id="r20" class="fld" value="Please report to the system administrator. User is not map" readonly></div>
          <div class="frow"><label for="r21">Decision:</label><div class="picker"><select id="r21" class="fld"><option>BreakLoop</option><option>NewIteration</option></select><ul class="opts"><li></li><li class="sel">BreakLoop</li><li>NewIteration</li></ul></div></div>
        </div>
        <div class="fbtns d-flex"><button type="button">Finalize</button><button type="button" class="plain">Back</button></div>
      </form>
    </div>
    <div class="spin progress-bar progress-bar-striped" role="progressbar" aria-label="Loading"></div>
  </div>
  <footer class="foot d-flex">
    <div class="brand d-flex"><svg width="15" height="46" class="mt-1 ms-1"><use href="#converge"/></svg><div class="brandtxt">CONVERGE<span class="tagl">PURE FIBER TECHNOLOGY</span></div></div>
    <div class="ver">Sunvizion - ContactCenter version 11.5 build 7423.26647</div>
    <div class="flex-grow-1">Copyright © 1990 - 2020 Suntech S.A. All Rights Reserved.</div>
    <div class="suntech"><svg width="50" height="23" class="mx-auto"><use href="#sun"/></svg><span>sun</span>tech</div>
  </footer>
  <div class="bar10 d-flex">
    <button class="it" aria-label="Start"><svg width="16" height="16"><path d="M0 2l7-1v6H0zM8 1l8-1v7H8zM0 8h7v7l-7-1zM8 8h8v8l-8-1z" fill="#fff"/></svg></button>
    <button class="it" aria-label="Search"><svg width="16" height="16"><circle cx="10" cy="6" r="5" fill="none" stroke="#fff" stroke-width="1.500"/><path d="M6 10l-6 6" stroke="#fff" stroke-width="1.500"/></svg></button>
    <button class="it" aria-label="Task view"><svg width="20" height="14"><path d="M4 1h12v12H4zM2 3H1v8h1M18 3h1v8h-1" fill="none" stroke="#fff" stroke-width="1.300"/></svg></button>
    <button class="it run" aria-label="Explorer"><svg width="22" height="19" viewBox="0 0 22 19"><path d="M0 1h8l2 2h12v15H0z" fill="#f8d775"/><path d="M0 5h22v12H0z" fill="#ffe894"/><path d="M4 19v-6q0-2 2-2h10q2 0 2 2v6h-4v-4H8v4z" fill="#35a8e0"/></svg></button>
    <button class="it" aria-label="Chrome"><svg width="23" height="23"><use href="#chrome"/></svg></button>
    <button class="it run" aria-label="UiPath Robot"><svg width="24" height="24" viewBox="0 0 24 24" color="#f04923"><use href="#ui" width="24" height="24"/><circle cx="20" cy="20" r="3" fill="#f04923" stroke="#fff"/></svg></button>
    <button class="it run" aria-label="UiPath Studio"><svg width="24" height="24" color="#0a4ea2"><use href="#ui"/></svg></button>
    <button class="it run act" aria-label="Chrome"><svg width="23" height="23"><use href="#chrome"/></svg></button>
    <div class="tray10 ms-auto d-flex align-items-center">
      <svg width="13" height="8"><path d="M1 7l5-6 5 6" fill="none" stroke="#fff" stroke-width="1.500"/></svg>
      <svg width="17" height="17"><use href="#net"/></svg>
      <svg width="17" height="14"><path d="M1 5h2l4-3v10L3 9H1zM9 5q2 2 0 4M11 3q4 4 0 8M13 1q6 6 0 12" fill="none" stroke="#fff"/></svg>
    </div>
    <div class="clock ck10">4:14 AM<br>8/26/2020</div>
    <button class="nt" aria-label="Notifications"><svg width="26" height="28"><path d="M1 2h16v12H8l-3 3v-3H1z" fill="#fff"/><path d="M4 5h10M4 8h10M4 11h7" stroke="#000"/><circle cx="17" cy="18" r="8" fill="#333" stroke="#999"/><text x="14" y="22" font-size="11" fill="#fff" font-family="Open Sans">1</text></svg></button>
  </div>
  <div class="restore b" role="dialog">
    <button class="cls" aria-label="Close"><svg width="11" height="11" color="#5f6368"><use href="#x"/></svg></button>
    <div class="ttl">Restore pages?</div><div class="mt-2">Chrome didn't shut down correctly.</div>
    <div class="d-flex justify-content-end gap-2 rbs2"><button class="rb">Restore</button><button class="rb o">Open startup pages</button></div>
  </div>
  <div class="wmark"><div>Activate Windows</div>Go to Settings to activate Windows.</div>
</section>
</main>
<script src="https://cdn.jsdelivr.net/npm/bootstrap@5.3.0/dist/js/bootstrap.bundle.min.js"></script>
</body>
</html>
